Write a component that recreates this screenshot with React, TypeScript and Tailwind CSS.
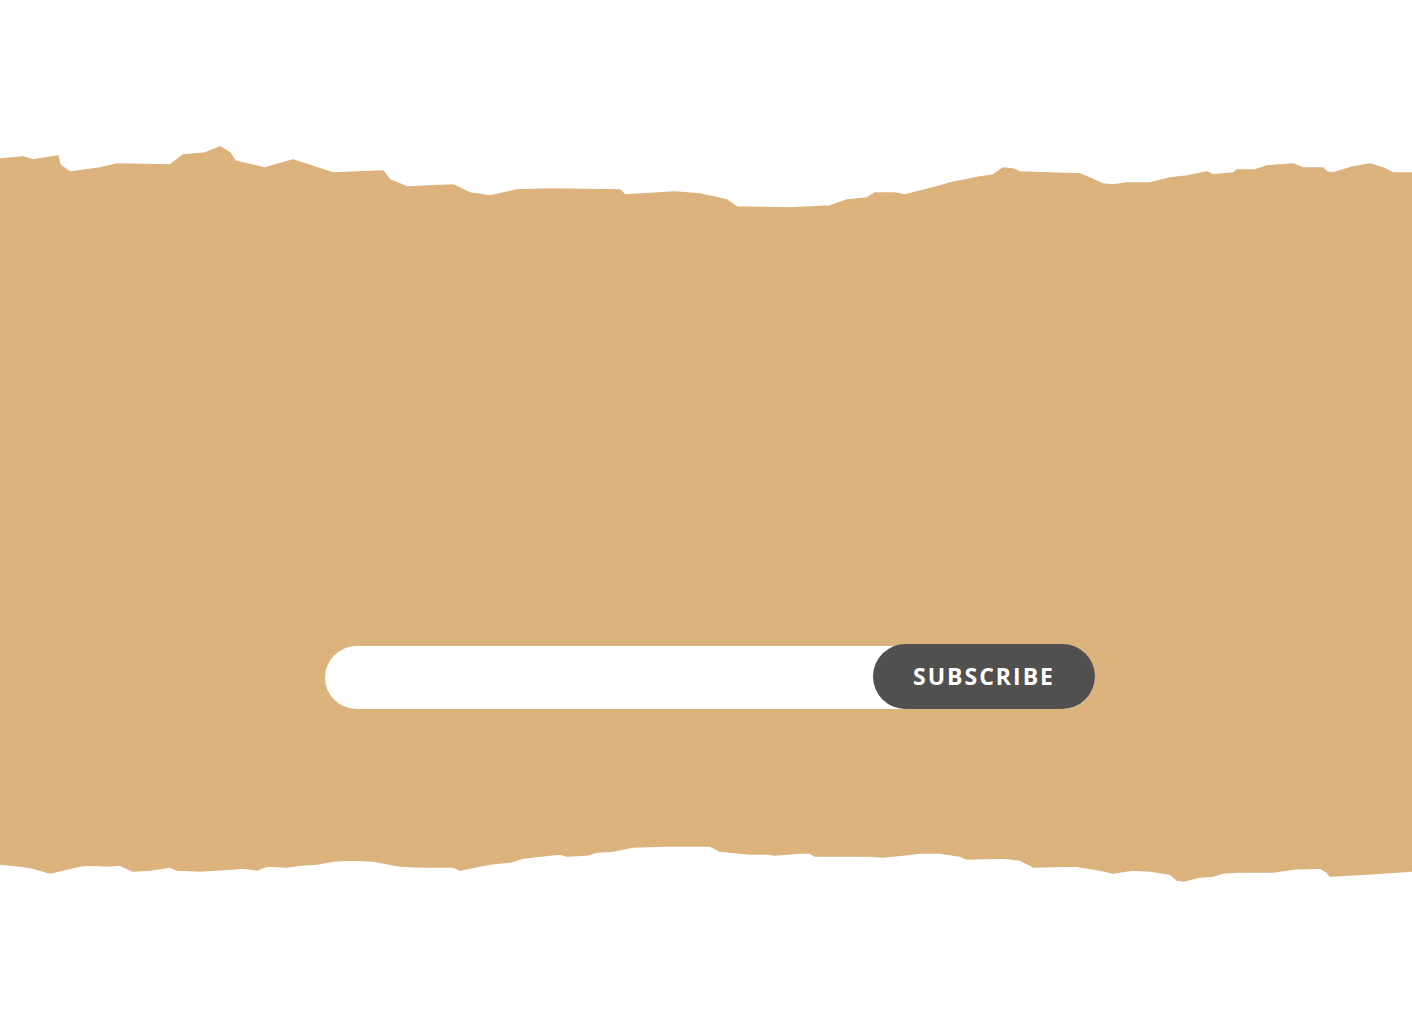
import React from 'react';

// torn paper edge, top side (coords relative to y = 140)
const topEdge =
    'M0,19 L23,17 L33,20 L58,16 L60,25 L70,32 L100,28 L117,24 L170,25 L183,15 L205,13 L220,7 L230,13 L235,21 L265,28 L293,20 L333,33 L383,31 L390,40 L407,47 L453,45 L470,53 L490,56 L517,50 L550,49 L620,50 L625,55 L675,52 L700,54 L727,60 L737,67 L790,68 L830,66 L847,60 L867,58 L875,53 L895,53 L905,55 L940,46 L950,43 L980,37 L993,35 L1003,28 L1013,29 L1020,32 L1080,34 L1103,44 L1113,45 L1127,43 L1150,43 L1170,38 L1187,36 L1207,32 L1213,35 L1233,33 L1237,30 L1255,30 L1267,26 L1293,24 L1303,28 L1323,28 L1327,32 L1333,33 L1353,27 L1370,24 L1383,28 L1393,33 L1412,33 L1412,70 L0,70 Z';

// torn paper edge, bottom side (coords relative to y = 845)
const bottomEdge =
    'M0,0 L1412,0 L1412,27 L1383,29 L1350,31 L1330,32 L1327,28 L1320,24 L1293,25 L1273,28 L1237,28 L1223,29 L1213,32 L1200,33 L1183,37 L1177,36 L1170,30 L1150,27 L1133,26 L1113,29 L1100,26 L1075,22 L1033,23 L1030,21 L1020,16 L1003,14 L967,15 L960,12 L953,11 L940,9 L920,9 L903,11 L883,13 L870,12 L815,12 L810,9 L800,9 L775,11 L767,10 L750,10 L720,7 L710,2 L663,2 L633,3 L613,7 L597,8 L587,11 L567,12 L560,10 L550,11 L523,14 L510,18 L490,20 L470,24 L460,26 L453,23 L420,23 L400,22 L373,17 L350,16 L333,17 L317,20 L300,21 L287,23 L267,22 L257,26 L243,24 L233,25 L200,27 L177,26 L170,23 L150,26 L133,27 L120,21 L107,22 L90,21 L80,22 L67,25 L50,29 L33,24 L20,22 L0,20 Z';

export default function App() {
    return (
        <div className="min-h-screen bg-white pt-[140px]" style={{ fontFamily: '"Open Sans", "Liberation Sans", sans-serif' }}>
            <svg className="block w-full h-[70px]" viewBox="0 0 1412 70" preserveAspectRatio="none">
                <path d={topEdge} fill="#dcb27d" stroke="#dcb27d" strokeWidth="1.5" strokeLinejoin="round" />
            </svg>

            <section className="bg-[#dcb27d] h-[636px] pt-[435px] -mt-px">
                <form className="flex w-[770px] mx-auto translate-x-[4px]" onSubmit={(e) => e.preventDefault()}>
                    <input
                        type="email"
                        aria-label="Email"
                        className="w-[770px] shrink-0 h-[63px] mt-[2px] rounded-full bg-white px-8 text-lg text-gray-700 outline-none"
                    />
                    <button
                        type="submit"
                        className="-ml-[222px] w-[222px] h-[65px] shrink-0 rounded-full bg-[#52504e] text-white text-[23px] font-bold tracking-[2px] relative"
                    >
                        SUBSCRIBE
                    </button>
                </form>
            </section>

            <svg className="block w-full h-[40px] -mt-px" viewBox="0 0 1412 40" preserveAspectRatio="none">
                <path d={bottomEdge} fill="#dcb27d" stroke="#dcb27d" strokeWidth="1.5" strokeLinejoin="round" />
            </svg>
        </div>
    );
}
